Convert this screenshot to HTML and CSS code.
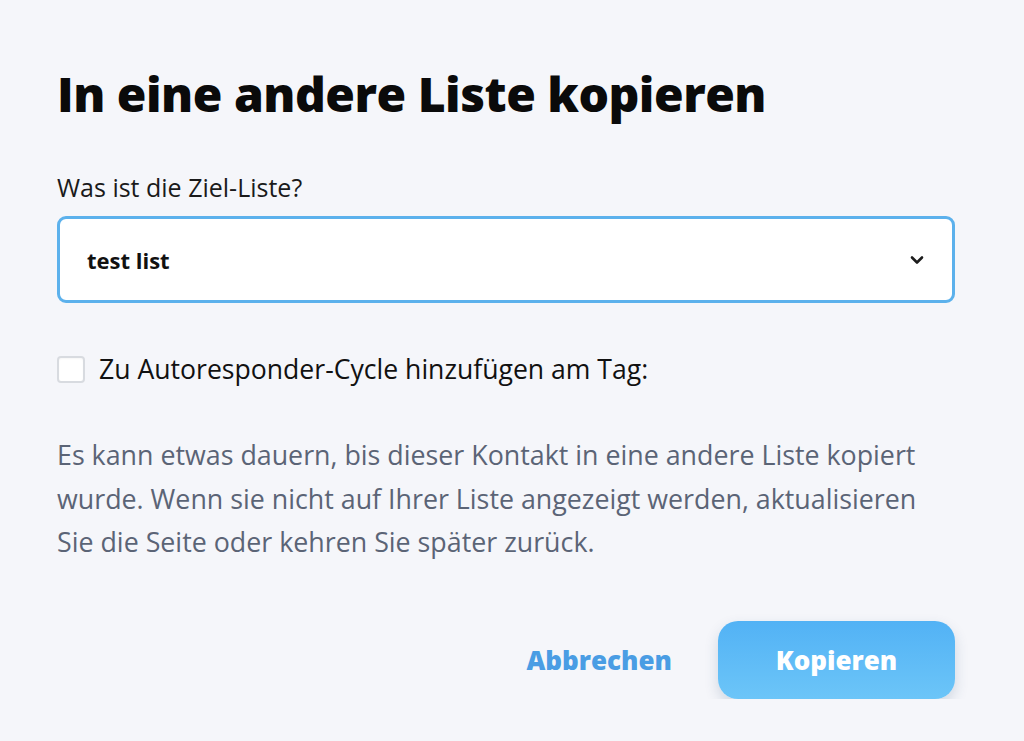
FILE: index.html
```html
<!DOCTYPE html>
<html lang="de">
<head>
<meta charset="utf-8">
<link rel="stylesheet" href="styles.css">
</head>
<body>
<div class="dialog">
  <h1 class="title">In eine andere Liste kopieren</h1>
  <label class="field-label">Was ist die Ziel-Liste?</label>
  <div class="select">
    <span class="select-value">test list</span>
    <svg class="chevron" width="14" height="10" viewBox="0 0 14 10"><path d="M2 2.5 L7 7.5 L12 2.5" fill="none" stroke="#1c1c1c" stroke-width="2.6" stroke-linecap="round" stroke-linejoin="round"/></svg>
  </div>
  <div class="check-row">
    <span class="checkbox"></span>
    <span class="check-label">Zu Autoresponder-Cycle hinzufügen am Tag:</span>
  </div>
  <p class="info">Es kann etwas dauern, bis dieser Kontakt in eine andere Liste kopiert wurde. Wenn sie nicht auf Ihrer Liste angezeigt werden, aktualisieren Sie die Seite oder kehren Sie später zurück.</p>
  <div class="actions">
    <button class="btn-link">Abbrechen</button>
    <button class="btn-primary">Kopieren</button>
  </div>
</div>
</body>
</html>
```
FILE: styles.css
```css
html, body {
  margin: 0;
  padding: 0;
  background: #f5f6fa;
}
body {
  font-family: "Open Sans", "Noto Sans", sans-serif;
  color: #111;
}
.dialog {
  width: 898px;
  padding: 59px 0 0 57px;
  display: flex;
  flex-direction: column;
}
.title {
  margin: 0;
  font-size: 48px;
  font-weight: 800;
  line-height: 70px;
  color: #0a0a0a;
  letter-spacing: -0.5px;
}
.field-label {
  margin-top: 43px;
  font-size: 25px;
  line-height: 30px;
  color: #1a1a1a;
}
.select {
  margin-top: 14px;
  height: 87px;
  box-sizing: border-box;
  border: 3px solid #5cb1ec;
  border-radius: 9px;
  background: #fff;
  display: flex;
  align-items: center;
  justify-content: space-between;
  padding: 0 28px 0 27px;
}
.select-value {
  font-size: 22px;
  font-weight: 700;
  color: #111;
}
.chevron {
  display: block;
}
.check-row {
  margin-top: 51px;
  display: flex;
  align-items: center;
  gap: 14px;
}
.checkbox {
  width: 28px;
  height: 27px;
  box-sizing: border-box;
  border: 2px solid #d8dbe0;
  border-radius: 4px;
  background: #fff;
  box-shadow: inset 0 1px 2px rgba(0, 0, 0, 0.04);
}
.check-label {
  font-size: 26.6px;
  line-height: 30px;
  color: #111;
}
.info {
  margin: 49px 0 0;
  padding-right: 20px;
  font-size: 26.8px;
  line-height: 43.5px;
  color: #5b6476;
}
.actions {
  margin-top: 57px;
  display: flex;
  justify-content: flex-end;
  align-items: center;
  gap: 46px;
}
.btn-link {
  background: none;
  border: none;
  padding: 0;
  font-family: inherit;
  font-size: 26px;
  font-weight: 800;
  color: #4a9de4;
}
.btn-primary {
  width: 237px;
  height: 78px;
  border: none;
  border-radius: 20px;
  background: linear-gradient(#52b2f5, #6cc5f8);
  color: #fff;
  font-family: inherit;
  font-size: 26px;
  font-weight: 800;
  box-shadow: 0 6px 14px rgba(40, 70, 110, 0.18);
}
```
